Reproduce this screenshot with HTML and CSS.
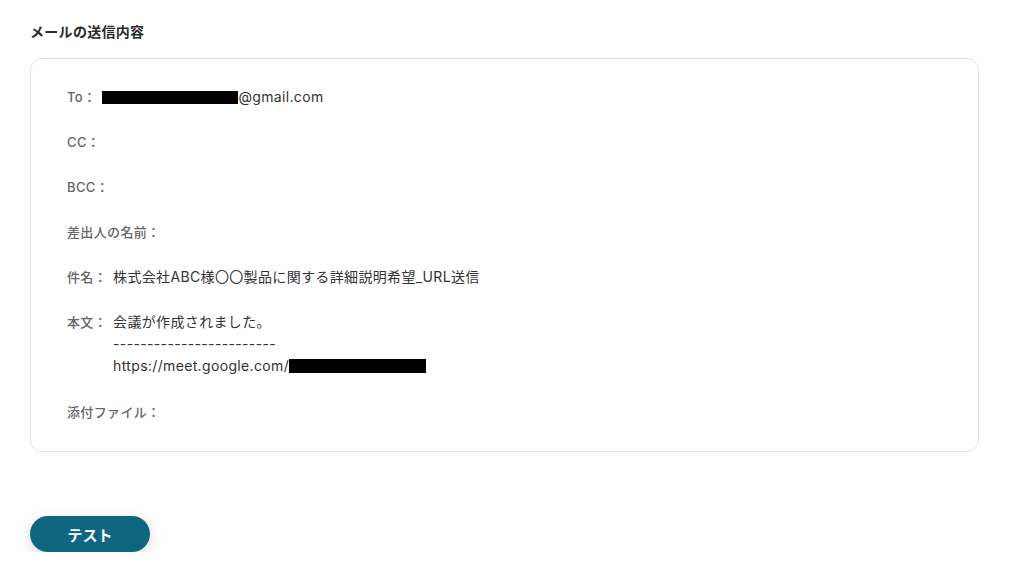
FILE: index.html
```html
<!DOCTYPE html>
<html lang="ja">
<head>
<meta charset="utf-8">
<link rel="stylesheet" href="styles.css">
</head>
<body>
<main class="page">
  <h2 class="title">メールの送信内容</h2>
  <section class="card">
    <div class="row">
      <span class="label">To：</span>
      <span class="value"><span class="redact redact-to"></span>@gmail.com</span>
    </div>
    <div class="row"><span class="label">CC：</span></div>
    <div class="row"><span class="label">BCC：</span></div>
    <div class="row"><span class="label">差出人の名前：</span></div>
    <div class="row">
      <span class="label">件名：</span>
      <span class="value">株式会社ABC様〇〇製品に関する詳細説明希望_URL送信</span>
    </div>
    <div class="row row-body">
      <span class="label">本文：</span>
      <span class="value">会議が作成されました。<br>------------------------<br>https://meet.google.com/<span class="redact redact-url"></span></span>
    </div>
    <div class="row"><span class="label">添付ファイル：</span></div>
  </section>
  <button class="btn">テスト</button>
</main>
</body>
</html>
```
FILE: styles.css
```css
html, body {
  margin: 0;
  background: #ffffff;
}
body {
  font-family: "Inter", "Noto Sans CJK JP", sans-serif;
  color: #333333;
}
.page {
  padding: 22px 30px 0 30px;
  width: 949px;
}
.title {
  margin: 0 0 16px 0;
  font-size: 14px;
  line-height: 20px;
  font-weight: 700;
  color: #2b2b2b;
  letter-spacing: 0.3px;
}
.card {
  border: 1px solid #e2e2e2;
  border-radius: 12px;
  padding: 27px 36px 28px 36px;
  display: flex;
  flex-direction: column;
  gap: 23px;
}
.row {
  display: flex;
  align-items: flex-start;
  gap: 6px;
  font-size: 14px;
  line-height: 22px;
  letter-spacing: 0.35px;
}
.row-body {
  padding-bottom: 1px;
}
.label {
  color: #666666;
  font-size: 13px;
  font-weight: 500;
  white-space: nowrap;
}
.value {
  color: #333333;
}
.redact {
  display: inline-block;
  background: #000;
  vertical-align: -2px;
}
.redact-to {
  width: 136px;
  height: 13px;
}
.redact-url {
  width: 137px;
  height: 14px;
}
.btn {
  margin-top: 64px;
  width: 120px;
  height: 36px;
  border: none;
  border-radius: 18px;
  background: #0e6680;
  color: #ffffff;
  font-family: "Noto Sans CJK JP", sans-serif;
  font-size: 15px;
  font-weight: 700;
  box-shadow: 0 4px 14px rgba(0, 0, 0, 0.15);
  display: block;
}
```
